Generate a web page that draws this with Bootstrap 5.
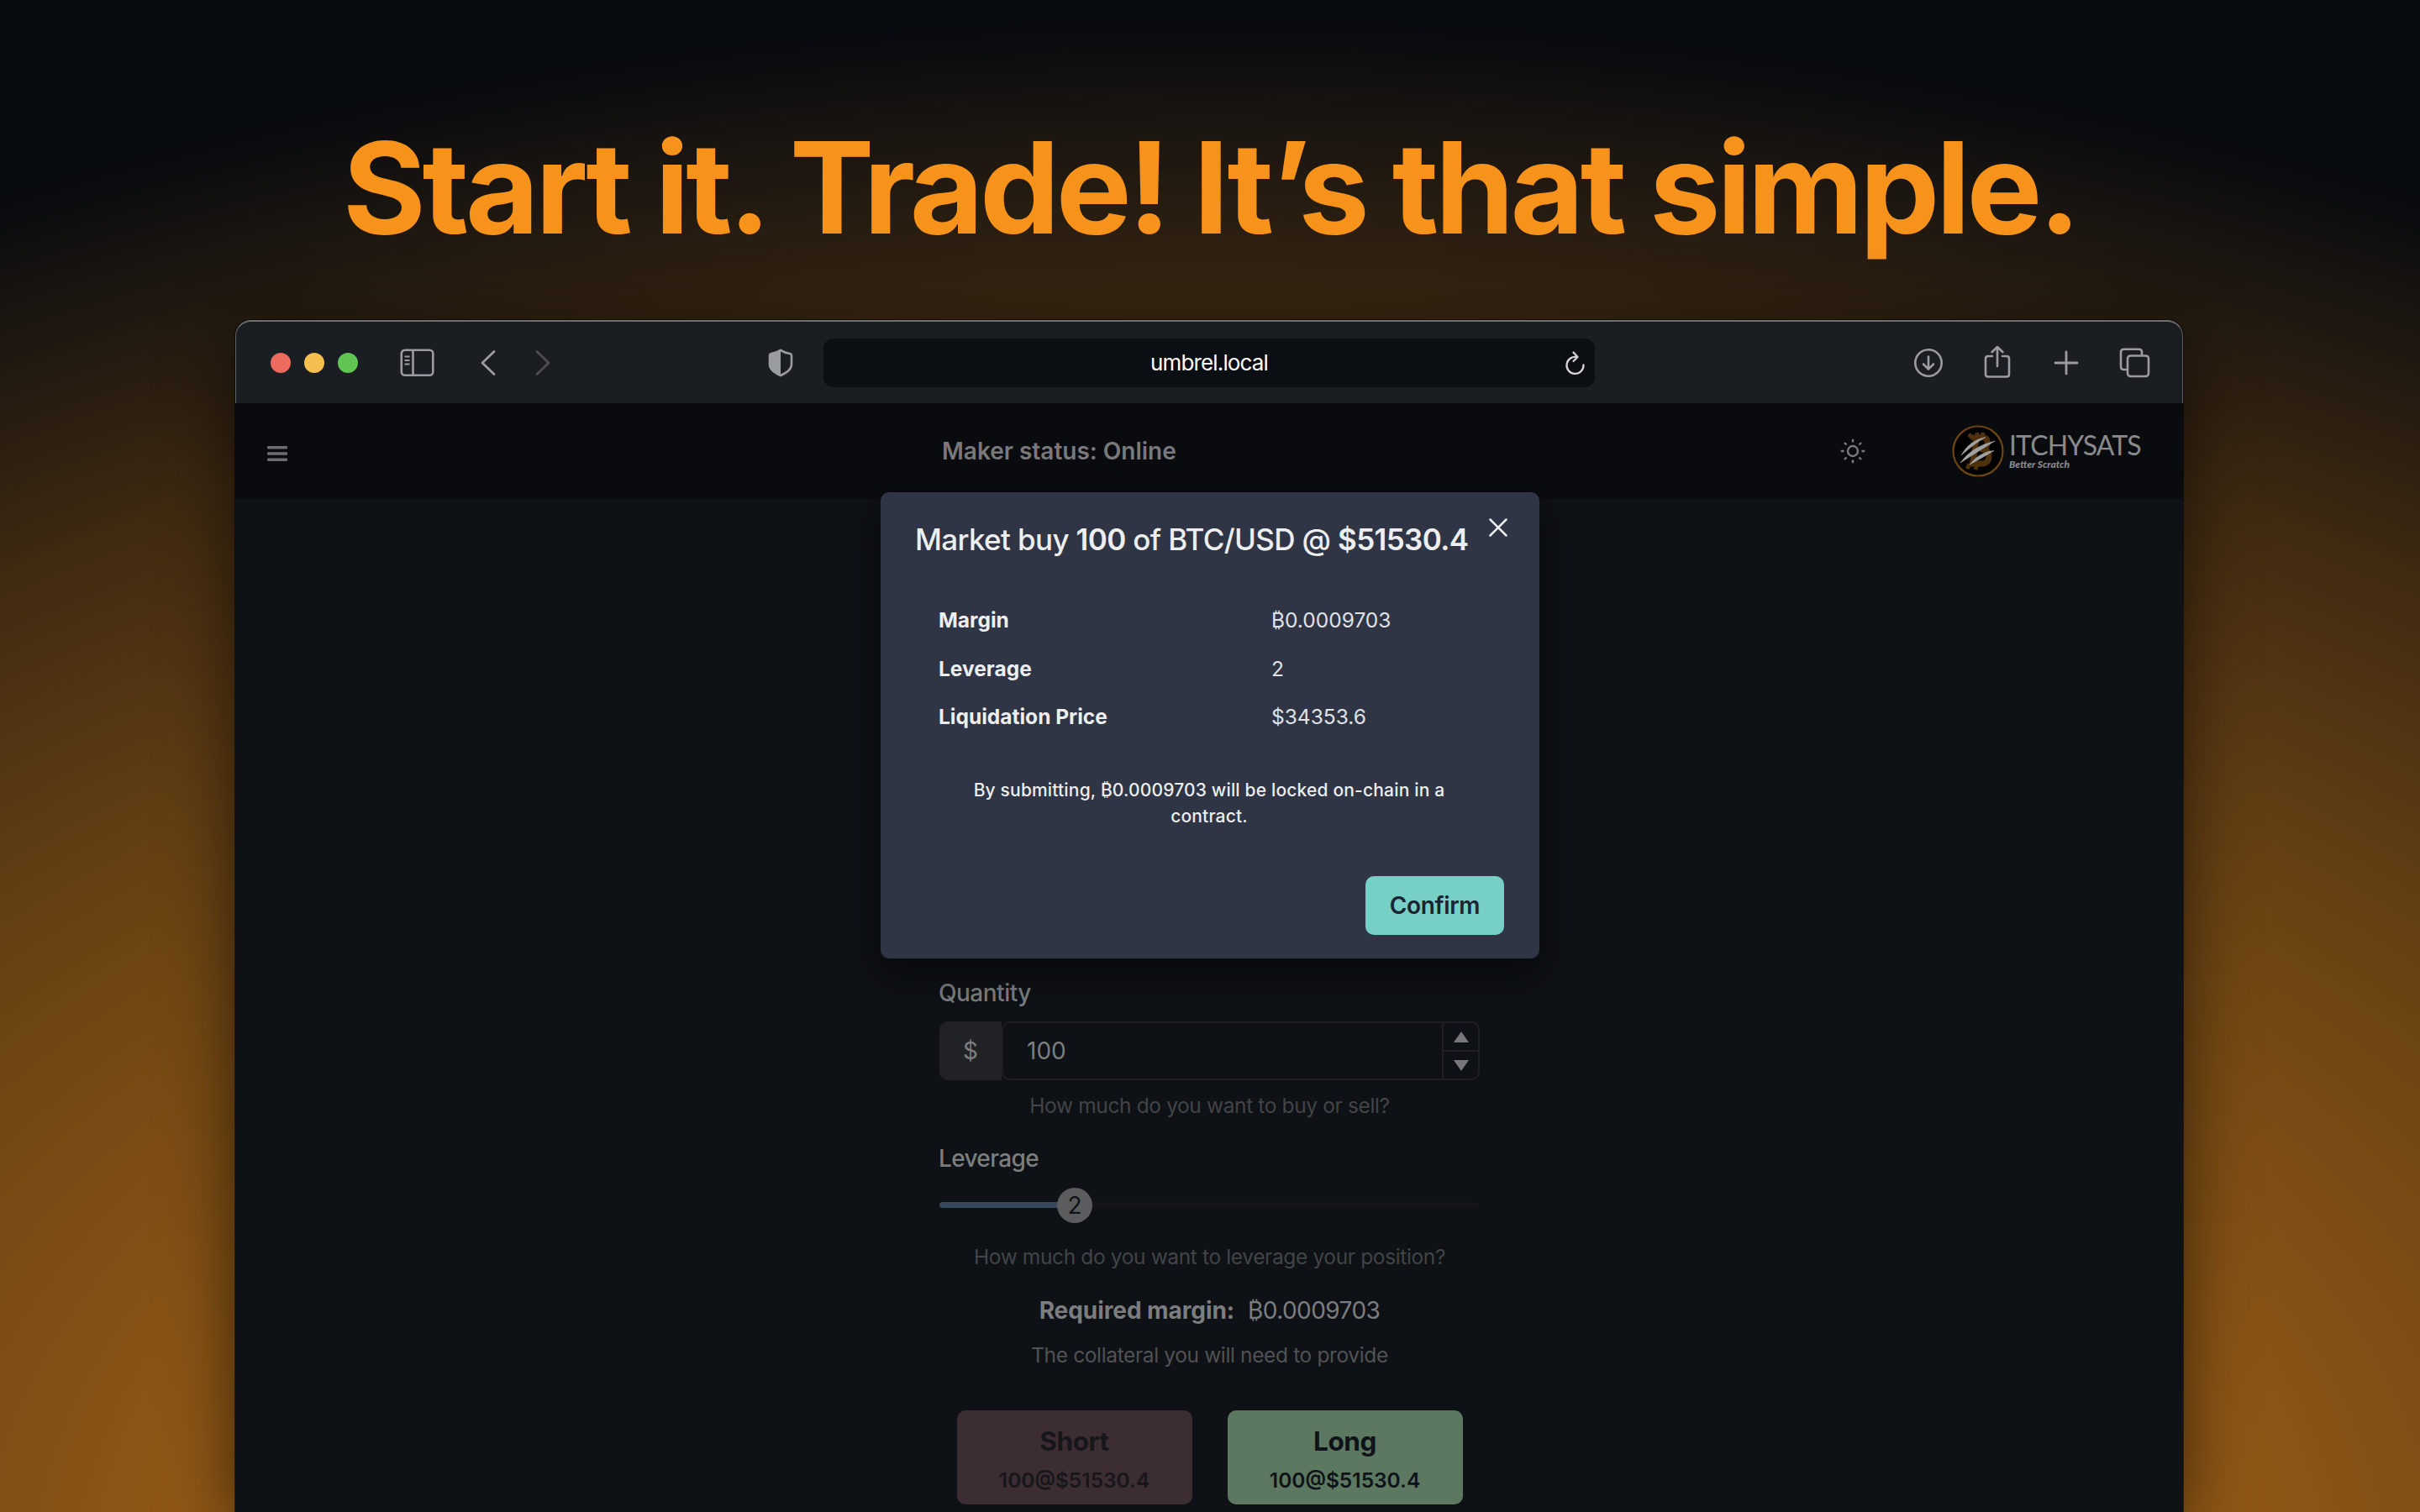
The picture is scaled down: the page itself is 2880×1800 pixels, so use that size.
<!DOCTYPE html>
<html lang="en">
<head>
<meta charset="utf-8">
<meta name="viewport" content="width=device-width, initial-scale=1">
<title>ItchySats</title>
<link href="https://cdn.jsdelivr.net/npm/bootstrap@5.3.0/dist/css/bootstrap.min.css" rel="stylesheet">
<style>
body{margin:0;font-family:Inter,"Liberation Sans",sans-serif;background:#070a0f}
.stage{width:2880px;height:1800px;overflow:hidden;
 background:radial-gradient(ellipse 3135px 1880px at 1440px 1900px,rgba(247,147,26,.8) 0%,rgba(247,147,26,.57) 39.6%,rgba(247,147,26,.51) 46%,rgba(247,147,26,.46) 53.6%,rgba(247,147,26,.385) 63%,rgba(247,147,26,.235) 79%,rgba(247,147,26,.165) 85%,rgba(247,147,26,.07) 94%,rgba(247,147,26,0) 100%),#070a0f}
.headline{margin:0;padding-top:133px;height:381px;line-height:180px;font-size:151px;font-weight:700;letter-spacing:-4.4px;color:#f7931a;white-space:nowrap}
.win{width:2318px;height:1419px;margin-left:280px;border-radius:19px 19px 0 0;box-shadow:0 20px 85px rgba(0,0,0,.62),0 0 0 1px rgba(0,0,0,.55)}
.chrome{height:99px;background:#1a1d21;border:1px solid #5f6265;border-top:2px solid #6d6f71;border-bottom:0;border-radius:19px 19px 0 0;padding:0 36px 0 41px}
.chrome svg,.topnav svg,.dialog svg{display:block;flex:none}
.dot{width:24px;height:24px;border-radius:50%}
.dot-r{background:#ed6a5f}.dot-y{background:#f5bf4f}.dot-g{background:#61c554}
.side{width:658px}
.i-side{margin-left:50px}.i-back{margin-left:53px}.i-fwd{margin-left:45px}.i-shield{margin-right:36px}
.i-reload{right:10px}
.tools{gap:42px}
.i-down{margin-right:2px}
.url{width:918px;height:58px;border-radius:12px;background:#0b0e12;color:#fff;font-size:26px;letter-spacing:-.85px}
.topnav{height:113px;background:#0a0b0f;padding:0 50px 0 38px}
.i-menu{margin-top:6px}.i-sun{margin-right:101px}
.status{margin-left:779px;font-size:28px;font-weight:600;color:#79797b}
.brand{margin-left:5px;width:157px;padding-top:1px}
.brand-name{font-family:Lato,sans-serif;font-size:32px;line-height:32px;letter-spacing:-.85px;color:#8a8a8c}
.brand-sub{font-family:Lato,sans-serif;font-style:italic;font-weight:900;font-size:12px;line-height:14px;color:#8a8a8c;white-space:nowrap}
.pane{height:1207px;background:#0e1115}
.trade{width:643px;margin-left:838px;padding-top:568px;color:#7c7d7f;font-size:28px;line-height:42px}
.lbl{font-weight:500;letter-spacing:-.5px;margin-left:-1px}
.lbl-lev{margin-top:23.5px;letter-spacing:-.65px}
.hint{font-size:24.5px;line-height:36.75px;letter-spacing:-.37px;color:#424447;text-align:center}
.hint-qty{margin-top:11.5px}.hint-lev{margin-top:22px}.hint-col{margin-top:14px;color:#515254}
.req{margin-top:24px;gap:16px}
.req-lbl{letter-spacing:-.08px}
.amount{letter-spacing:-.55px}
.qty{height:70px;margin-top:13px}
.qty .addon{width:74px;background:#212226;border:2px solid #212226;border-radius:10px 0 0 10px}
.qty .field{border:2px solid #1e2023;border-radius:10px;padding-left:28px}
.qty .steps{width:43px;border-left:2px solid #1e2023}
.qty .steps div+div{border-top:2px solid #1e2023}
.slider{height:42px;margin-top:14px}
.slider .rail{height:7px;border-radius:4px;background:#131518}
.slider .fill{height:7px;border-radius:4px;background:#38495b}
.thumb{left:140px;top:0;width:42px;height:42px;border-radius:50%;background:#5b5c5e;color:#101216}
.orders{gap:42px;margin-top:48px}
.side-btn{width:280px;height:112px;border-radius:10px;border:0;color:#0f1318;font-weight:700;padding:2px 0 0}
.side-btn div{font-size:31.5px;line-height:48px;letter-spacing:-.4px}
.side-btn p{font-size:24.5px;line-height:36px;font-weight:600;margin:4px 0 0}
.short{background:#3b2d32;color:#17161a}
.long{background:#5c7861}
.dialog{left:768px;top:205px;width:784px;height:555px;border-radius:10px;background:#2f3545;color:#eceef0;box-shadow:0 18px 45px rgba(0,0,0,.45);padding:30px 42px 28px}
.dialog h2{margin:0 0 0 -1px;font-size:35px;line-height:52px;font-weight:500;letter-spacing:-.64px;white-space:nowrap}
.dialog h2 b{font-weight:600}
.shut{right:38px;top:31px}
.facts{margin:42px 27px 0;font-size:24.5px;line-height:57.7px}
.facts dt{width:396px;font-weight:700}
.facts dd{margin:0;color:#e0e2e6}
.note{margin:41.5px 60px 0 58px;font-size:21px;line-height:31.5px;font-weight:500;letter-spacing:.17px;text-align:center}
.ok{width:165px;height:70px;border:0;border-radius:10px;background:#76d0c5;color:#1a2433;font-size:28px;font-weight:600;letter-spacing:-.35px}
</style>
<script src="https://cdn.jsdelivr.net/npm/bootstrap@5.3.0/dist/js/bootstrap.bundle.min.js"></script>
</head>
<body>
<div class="stage">
<h1 class="headline text-center">Start it. Trade! It’s that simple.</h1>
<main class="win position-relative">
 <header class="chrome d-flex align-items-center">
  <div class="side d-flex align-items-center">
   <i class="dot dot-r"></i><i class="dot dot-y ms-3"></i><i class="dot dot-g ms-3"></i>
   <svg class="i-side" width="42" height="34" viewBox="0 0 42 34" fill="none" stroke="#9b9ca0" stroke-width="2.6"><rect x="1.8" y="1.8" width="37.5" height="30" rx="4"/><path d="M15.5 2v30"/><path d="M5.5 9.5h6M5.5 14h6M5.5 18.5h6" stroke-width="2"/></svg>
   <svg class="i-back" width="20" height="32" viewBox="0 0 20 32" fill="none" stroke="#9b9ca0" stroke-width="2.8" stroke-linecap="round" stroke-linejoin="round"><path d="M17 2.5L3 16L17 29.5"/></svg>
   <svg class="i-fwd" width="20" height="32" viewBox="0 0 20 32" fill="none" stroke="#4b4d51" stroke-width="2.8" stroke-linecap="round" stroke-linejoin="round"><path d="M3 2.5L17 16L3 29.5"/></svg>
   <svg class="i-shield ms-auto" width="30" height="34" viewBox="0 0 30 34"><path d="M15 1.800C11 4.500 7 5.500 4 6C2.500 6.400 2 7 2 8.500V19C2 25 8 28.500 15 32C22 28.500 28 25 28 19V8.500C28 7 27.500 6.400 26 6C23 5.500 19 4.500 15 1.800Z" fill="none" stroke="#9b9ca0" stroke-width="2.600" stroke-linejoin="round"/><path d="M15 2C11 4.500 7 5.500 4 6C2.500 6.400 2 7 2 8.500V19C2 25 8 28.500 15 32Z" fill="#9b9ca0"/></svg>
  </div>
  <div class="url d-flex align-items-center justify-content-center position-relative">umbrel.local
   <svg class="i-reload position-absolute" width="26" height="30" viewBox="0 0 26 30" fill="none" stroke="#d4d5d6" stroke-width="2.300" stroke-linecap="round" stroke-linejoin="round"><path d="M15 8.200A10 10 0 1 0 22.500 17.500M10.500 2.500L15.500 8L10.500 13"/></svg></div>
  <div class="tools d-flex align-items-center ms-auto">
   <svg class="i-down" width="36" height="36" viewBox="0 0 36 36" fill="none" stroke="#9b9ca0" stroke-width="2.600" stroke-linecap="round" stroke-linejoin="round"><circle cx="18" cy="18" r="15.700"/><path d="M18 10.500V25M12 19.500L18 25.500L24 19.500"/></svg>
   <svg width="40" height="42" viewBox="0 0 40 42" fill="none" stroke="#9b9ca0" stroke-width="2.600" stroke-linecap="round" stroke-linejoin="round"><path d="M14 13H9Q6 13 6 16V34.500Q6 37.500 9 37.500H31Q34 37.500 34 34.500V16Q34 13 31 13H26M20 25V2M13.500 8.200L20 2L26.500 8.200"/></svg>
   <svg width="40" height="36" viewBox="0 0 40 36" fill="none" stroke="#9b9ca0" stroke-width="2.800" stroke-linecap="round"><path d="M20 5V31M7 18H33"/></svg>
   <svg width="40" height="36" viewBox="0 0 40 36" fill="none" stroke="#9b9ca0" stroke-width="2.600" stroke-linejoin="round"><rect x="11" y="9.500" width="25" height="24.500" rx="3.500"/><path d="M10.500 26H6.500Q3 26 3 22.500V5Q3 1.800 6.500 1.800H24.500Q28 1.800 28 5V9"/></svg>
  </div>
 </header>
 <nav class="topnav d-flex align-items-center">
  <svg class="i-menu" width="24" height="18" viewBox="0 0 24 18" fill="#6c6d70"><rect width="24" height="3.600" rx="1"/><rect y="7.200" width="24" height="3.600" rx="1"/><rect y="14.400" width="24" height="3.600" rx="1"/></svg>
  <span class="status">Maker status: Online</span>
  <svg class="i-sun ms-auto" width="32" height="32" viewBox="0 0 32 32" fill="none" stroke="#7a7b7d" stroke-width="2.400"><circle cx="16" cy="16" r="6"/><path d="M16 1.800V5.500M16 26.500V30.200M1.800 16H5.500M26.500 16H30.200M6 6L8.500 8.500M23.500 23.500L26 26M6 26L8.500 23.500M23.500 8.500L26 6"/></svg>
  <svg width="64" height="64" viewBox="0 0 64 64"><circle cx="32" cy="32" r="29.500" fill="#000" stroke="#6f4514" stroke-width="2.200"/><g fill="none" stroke="#4f310e" stroke-linejoin="round"><path d="M25 16H38Q44 16 43 23Q42 29 37 30Q46 31 45 39Q44 47 36 47H22M30 17L26 46" stroke-width="7"/><path d="M21 12L26 17M31 10V17M38 10L37 17M22 47L19 53M31 47L29 54" stroke-width="5"/></g><g fill="#a2a2a2" stroke="#a2a2a2" stroke-width=".6"><path d="M12 37Q22 19 41 15.500Q29 22 12 37Z"/><path d="M11 46Q24 27 52 20Q36 30 11 46Z"/><path d="M22 48Q34 33 51 31.500Q39 39 22 48Z"/></g></svg>
  <div class="brand"><div class="brand-name">ITCHYSATS</div><div class="brand-sub">Better Scratch</div></div>
 </nav>
 <section class="pane">
  <form class="trade">
   <div class="lbl">Quantity</div>
   <div class="qty d-flex"><div class="addon d-flex align-items-center justify-content-center">$</div>
    <div class="field flex-grow-1 d-flex align-items-center"><span>100</span>
     <div class="steps ms-auto align-self-stretch d-flex flex-column">
      <div class="flex-fill d-flex align-items-center justify-content-center"><svg width="18" height="13" viewBox="0 0 18 13"><path d="M9 0L18 13H0Z" fill="#77787a"/></svg></div>
      <div class="flex-fill d-flex align-items-center justify-content-center"><svg width="18" height="13" viewBox="0 0 18 13"><path d="M9 13L18 0H0Z" fill="#77787a"/></svg></div>
     </div></div></div>
   <div class="hint hint-qty">How much do you want to buy or sell?</div>
   <div class="lbl lbl-lev">Leverage</div>
   <div class="slider position-relative d-flex align-items-center"><div class="rail w-100"><div class="fill" style="width:25%"></div></div><div class="thumb position-absolute text-center">2</div></div>
   <div class="hint hint-lev">How much do you want to leverage your position?</div>
   <div class="req d-flex justify-content-center"><span class="fw-bold req-lbl">Required margin:</span><span class="amount">₿0.0009703</span></div>
   <div class="hint hint-col">The collateral you will need to provide</div>
   <div class="orders d-flex justify-content-center">
    <button type="button" class="side-btn short"><div>Short</div><p>100@$51530.4</p></button>
    <button type="button" class="side-btn long"><div>Long</div><p>100@$51530.4</p></button>
   </div>
  </form>
 </section>
 <div class="dialog position-absolute d-flex flex-column">
  <h2>Market buy <b>100</b> of BTC/USD @ <b>$51530.4</b></h2>
  <svg class="shut position-absolute" width="22" height="22" viewBox="0 0 22 22" stroke="#eceef0" stroke-width="2.500" stroke-linecap="round"><path d="M1.500 1.500L20.500 20.500M20.500 1.500L1.500 20.500"/></svg>
  <dl class="facts mb-0">
   <div class="d-flex"><dt>Margin</dt><dd>₿0.0009703</dd></div>
   <div class="d-flex"><dt>Leverage</dt><dd>2</dd></div>
   <div class="d-flex"><dt>Liquidation Price</dt><dd>$34353.6</dd></div>
  </dl>
  <p class="note mb-0">By submitting, ₿0.0009703 will be locked on-chain in a<br>contract.</p>
  <button type="button" class="ok mt-auto ms-auto">Confirm</button>
 </div>
</main>
</div>
</body>
</html>
